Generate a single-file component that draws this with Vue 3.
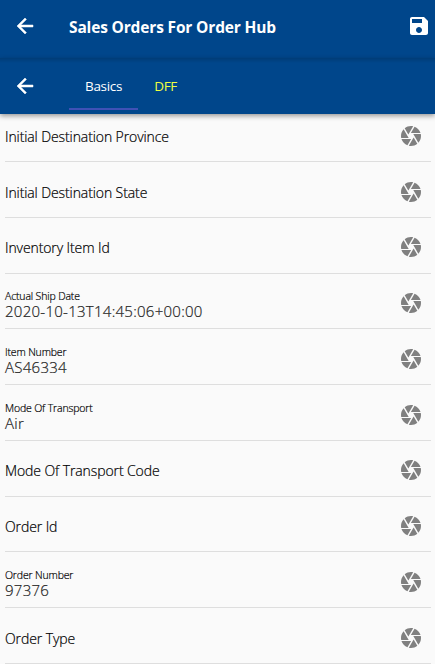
<script setup>
const fields = [
  { label: 'Initial Destination Province' },
  { label: 'Initial Destination State' },
  { label: 'Inventory Item Id' },
  { label: 'Actual Ship Date', value: '2020-10-13T14:45:06+00:00' },
  { label: 'Item Number', value: 'AS46334' },
  { label: 'Mode Of Transport', value: 'Air' },
  { label: 'Mode Of Transport Code' },
  { label: 'Order Id' },
  { label: 'Order Number', value: '97376' },
  { label: 'Order Type' },
]
</script>

<template>
  <div class="page">
    <header class="bar title-bar">
      <svg class="icon arrow" viewBox="0 0 24 24"><path d="M20 11H7.83l5.59-5.59L12 4l-8 8 8 8 1.41-1.41L7.83 13H20v-2z" /></svg>
      <h1 class="title"><span>Sales Orders For Order Hub</span></h1>
      <svg class="icon" viewBox="0 0 24 24"><path d="M17 3H5c-1.11 0-2 .9-2 2v14c0 1.1.89 2 2 2h14c1.1 0 2-.9 2-2V7l-4-4zm-5 16c-1.66 0-3-1.34-3-3s1.34-3 3-3 3 1.34 3 3-1.34 3-3 3zm3-10H5V5h10v4z" /></svg>
    </header>
    <nav class="bar tab-bar">
      <svg class="icon arrow" viewBox="0 0 24 24"><path d="M20 11H7.83l5.59-5.59L12 4l-8 8 8 8 1.41-1.41L7.83 13H20v-2z" /></svg>
      <div class="tabs">
        <span class="tab active">Basics</span>
        <span class="tab other">DFF</span>
      </div>
    </nav>
    <main class="list">
      <div v-for="f in fields" :key="f.label" class="row">
        <div class="text" :class="{ filled: f.value }">
          <span class="label">{{ f.label }}</span>
          <span v-if="f.value" class="value">{{ f.value }}</span>
        </div>
        <svg class="camera" viewBox="0 0 24 24"><path d="M9.4 10.5l4.77-8.26C13.47 2.09 12.75 2 12 2c-2.4 0-4.6.85-6.32 2.25l3.66 6.35.06-.1zM21.54 9c-.92-2.92-3.15-5.26-6-6.34L11.88 9h9.66zm.26 1h-7.49l.29.5 4.76 8.25C21 16.97 22 14.61 22 12c0-.69-.07-1.35-.2-2zM8.54 12l-3.9-6.75C3.01 7.03 2 9.39 2 12c0 .69.07 1.35.2 2h7.49l-1.15-2zm-6.08 3c.92 2.92 3.15 5.26 6 6.34L12.12 15H2.46zm11.27 0l-3.9 6.76c.7.15 1.42.24 2.17.24 2.4 0 4.6-.85 6.32-2.25l-3.66-6.35-.93 1.6z" /></svg>
      </div>
    </main>
  </div>
</template>

<style>
body { background: #fafafa; overflow: hidden; }
</style>

<style scoped>
.page {
  height: 664px;
  overflow: hidden;
  background: #fafafa;
  font-family: "Open Sans", "Noto Sans", sans-serif;
  color: #000;
}
.bar {
  box-sizing: border-box;
  display: flex;
  background: #00468b;
  color: #fff;
  position: relative;
}
.title-bar {
  height: 58px;
  padding: 14px 4px 0 13px;
}
.tab-bar {
  height: 56px;
  padding: 16px 4px 0 13px;
  box-shadow: 0 2px 5px rgba(0, 0, 0, .4);
  background: linear-gradient(#003c77, #00468b 5px);
}
.icon {
  flex: none;
  width: 24px;
  height: 24px;
  fill: #fff;
}
.arrow {
  stroke: #fff;
  stroke-width: .5px;
}
.title {
  flex: 1;
  margin: 0 0 0 32px;
  font-size: 15.5px;
  letter-spacing: -.16px;
  line-height: 27px;
  font-weight: 700;
  white-space: nowrap;
}
.tabs {
  display: flex;
  margin: -16px 0 0 32px;
}
.tab {
  box-sizing: border-box;
  height: 52px;
  padding: 0 16px;
  font-size: 13.5px;
  letter-spacing: -.3px;
  line-height: 56px;
  border-bottom: 2px solid transparent;
}
.active { border-color: #3f51b5; }
.other { color: #eeff41; }
.row {
  box-sizing: border-box;
  height: 55.75px;
  margin: 0 4px 0 5px;
  padding-right: 8px;
  display: flex;
  align-items: center;
  border-bottom: 1px solid #dedede;
}
.list { margin-top: -7.7px; }
.text {
  flex: 1;
  display: flex;
  flex-direction: column;
  white-space: nowrap;
  -webkit-text-stroke: .2px currentColor;
}
.label {
  font-size: 14px;
  font-weight: 300;
  letter-spacing: -.1px;
  line-height: 20px;
  position: relative;
  top: 3.2px;
}
.filled .label {
  font-size: 10.5px;
  letter-spacing: -.15px;
  line-height: 15px;
  top: 3.9px;
}
.value {
  font-size: 15px;
  font-weight: 300;
  letter-spacing: .27px;
  line-height: 16px;
  position: relative;
  top: 2.7px;
  color: #222;
}
.camera {
  width: 24px;
  height: 24px;
  fill: #808080;
  position: relative;
  top: 2.3px;
}
</style>
